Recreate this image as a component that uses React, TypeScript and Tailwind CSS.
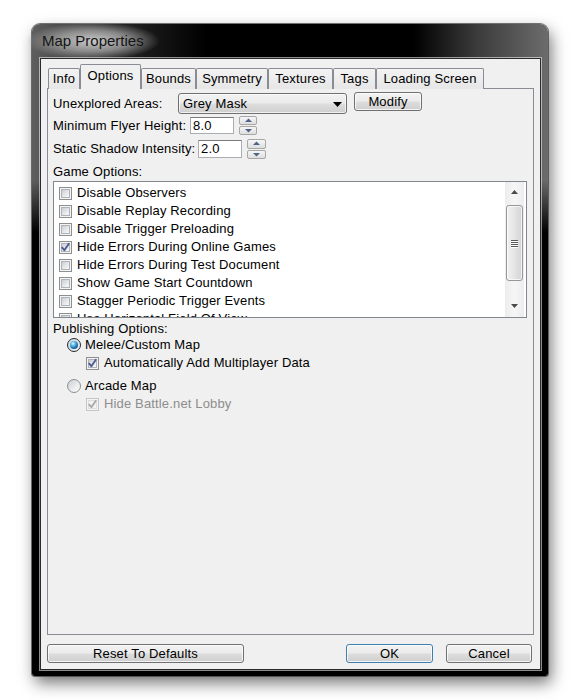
import React from "react";

const btnBase =
  "flex items-center justify-center rounded-[3px] border bg-[linear-gradient(180deg,#f2f2f2_0%,#ebebeb_48%,#dddddd_52%,#cfcfcf_100%)] shadow-[inset_0_0_0_1px_rgba(255,255,255,0.75)] leading-[16px]";

function Check({ checked = false, disabled = false }: { checked?: boolean; disabled?: boolean }) {
  return (
    <span
      className={
        disabled
          ? "relative inline-block w-[13px] h-[13px] shrink-0 border border-[#c5c5c5] bg-[#f4f4f4]"
          : "relative inline-block w-[13px] h-[13px] shrink-0 border border-[#8e8f8f] bg-[#f4f4f4]"
      }
    >
      <span
        className={
          disabled
            ? "absolute inset-[1px] border border-[#dedede] bg-[#f2f2f2]"
            : "absolute inset-[1px] border border-[#b0b4ba] bg-[linear-gradient(135deg,#c9cdd3_0%,#e6e8eb_55%,#f8f8f8_100%)]"
        }
      />
      {checked && (
        <svg className="absolute left-0 top-0" width="11" height="11" viewBox="0 0 11 11">
          <path
            d="M2.2 5.6 L4.4 8.3 L8.8 1.8"
            fill="none"
            stroke={disabled ? "#a9a9a9" : "#4a5a8f"}
            strokeWidth="1.8"
            strokeLinecap="round"
            strokeLinejoin="round"
          />
        </svg>
      )}
    </span>
  );
}

function Radio({ checked = false }: { checked?: boolean }) {
  return (
    <span
      className={
        checked
          ? "relative inline-block w-[14px] h-[14px] shrink-0 rounded-full border border-[#1f2a33] bg-[linear-gradient(135deg,#cfd4da,#f4f4f4)]"
          : "relative inline-block w-[14px] h-[14px] shrink-0 rounded-full border border-[#8e8f8f] bg-[linear-gradient(135deg,#c9cdd3_0%,#eceef0_60%,#fafafa_100%)]"
      }
    >
      {checked && (
        <span className="absolute inset-[2px] rounded-full bg-[radial-gradient(circle_at_38%_32%,#e8f8ff_0%,#62bde8_28%,#1b6fae_62%,#0a2f5c_100%)]" />
      )}
    </span>
  );
}

function Spinner({ h }: { h: string }) {
  return (
    <div className={h === "19" ? "flex flex-col w-[18px] h-[19px] gap-[1px]" : "flex flex-col w-[19px] h-[20px] gap-[1px]"}>
      {[0, 1].map((i) => (
        <div
          key={i}
          className="flex-1 flex items-center justify-center rounded-[2px] border border-[#a7a7a7] bg-[linear-gradient(180deg,#f6f6f6,#dedede)]"
        >
          <svg width="9" height="5" viewBox="0 0 9 5">
            {i === 0 ? (
              <path d="M1 4 L4.5 0.5 L8 4 Z" fill="#4d6287" />
            ) : (
              <path d="M1 1 L4.5 4.5 L8 1 Z" fill="#4d6287" />
            )}
          </svg>
        </div>
      ))}
    </div>
  );
}

const tabs: { label: string; w: string; selected?: boolean }[] = [
  { label: "Info", w: "w-[32px]" },
  { label: "Options", w: "w-[61px]", selected: true },
  { label: "Bounds", w: "w-[55px]" },
  { label: "Symmetry", w: "w-[72px]" },
  { label: "Textures", w: "w-[65px]" },
  { label: "Tags", w: "w-[43px]" },
  { label: "Loading Screen", w: "w-[108px]" },
];

const items: { label: string; checked?: boolean }[] = [
  { label: "Disable Observers" },
  { label: "Disable Replay Recording" },
  { label: "Disable Trigger Preloading" },
  { label: "Hide Errors During Online Games", checked: true },
  { label: "Hide Errors During Test Document" },
  { label: "Show Game Start Countdown" },
  { label: "Stagger Periodic Trigger Events" },
  { label: "Use Horizontal Field Of View" },
];

export default function App() {
  return (
    <div className="w-[580px] h-[700px] bg-white pt-[24px] pl-[32px] font-['Liberation_Sans',Arial,sans-serif] text-[13px] tracking-[0.15px] text-black">
      <div className="w-[516px] h-[652px] flex flex-col rounded-t-[8px] rounded-b-[3px] bg-[linear-gradient(180deg,rgba(0,0,0,0)_0%,rgba(0,0,0,0)_24%,#000_32%),linear-gradient(90deg,#5e5e5e_0%,#262626_16%,#000_34%,#000_74%,#3a3a3a_86%,#6c6c6c_100%)] shadow-[0_0_0_1px_rgba(60,60,60,0.7),3px_7px_16px_rgba(0,0,0,0.55)]">
        {/* title bar */}
        <div className="h-[34px] flex items-center pl-[10px]">
          <span className="-ml-[16px] px-[16px] py-[10px] text-[15px] tracking-normal leading-[18px] text-[#141414] bg-[radial-gradient(closest-side,rgba(210,210,210,0.95)_0%,rgba(165,165,165,0.75)_55%,rgba(0,0,0,0)_100%)]">
            Map Properties
          </span>
        </div>
        {/* body */}
        <div className="flex-1 flex pl-[8px] pr-[7px] pb-[6px]">
          <div className="flex-1 flex flex-col bg-[#f0f0f0] border border-[#2a2a2a] shadow-[0_0_0_1px_rgba(255,255,255,0.55)] pt-[5px] pl-[6px] pr-[6px] pb-[6px]">
            {/* tab strip */}
            <div className="relative z-10 flex items-end h-[25px] -mb-[1px] pl-[1px]">
              {tabs.map((t) =>
                t.selected ? (
                  <div
                    key={t.label}
                    className={`${t.w} h-[25px] flex items-start justify-center pt-[3px] leading-[16px] bg-[#f0f0f0] border border-b-0 border-[#898c95] rounded-t-[2px]`}
                  >
                    {t.label}
                  </div>
                ) : (
                  <div
                    key={t.label}
                    className={`${t.w} h-[21px] flex items-center justify-center pb-[1px] leading-[16px] bg-[linear-gradient(180deg,#f3f3f3,#e6e6e6)] border border-b-0 border-[#898c95] rounded-t-[2px]`}
                  >
                    {t.label}
                  </div>
                )
              )}
            </div>
            {/* panel */}
            <div className="flex-1 border border-[#898c95] bg-[#f0f0f0] pl-[5px] pt-[4px] flex flex-col">
              {/* row 1 */}
              <div className="flex items-start h-[21px]">
                <div className="w-[125px] h-[21px] flex items-center leading-[16px]">Unexplored Areas:</div>
                <div className="relative w-[169px] h-[21px] flex items-center pl-[4px] rounded-[3px] border border-[#707070] bg-[linear-gradient(180deg,#f2f2f2_0%,#ebebeb_48%,#dddddd_52%,#cfcfcf_100%)] shadow-[inset_0_0_0_1px_rgba(255,255,255,0.7)] leading-[16px]">
                  Grey Mask
                  <svg className="absolute right-[4px] top-[8px]" width="9" height="5" viewBox="0 0 9 5">
                    <path d="M0 0 L9 0 L4.5 5 Z" fill="#000" />
                  </svg>
                </div>
                <div className={`${btnBase} ml-[7px] -mt-[1px] w-[68px] h-[19px] border-[#707070]`}>Modify</div>
              </div>
              {/* row 2 */}
              <div className="flex items-center h-[19px] mt-[2px]">
                <div className="w-[137px] leading-[16px]">Minimum Flyer Height:</div>
                <div className="w-[44px] h-[17px] flex items-center pl-[2px] bg-white border border-[#abadb3] border-t-[#7a7a7a] leading-[16px]">8.0</div>
                <div className="ml-[5px]">
                  <Spinner h="19" />
                </div>
              </div>
              {/* row 3 */}
              <div className="flex items-center h-[20px] mt-[4px]">
                <div className="w-[145px] leading-[16px]">Static Shadow Intensity:</div>
                <div className="w-[44px] h-[18px] flex items-center pl-[2px] bg-white border border-[#abadb3] border-t-[#7a7a7a] leading-[16px]">2.0</div>
                <div className="ml-[5px]">
                  <Spinner h="20" />
                </div>
              </div>
              {/* game options */}
              <div className="h-[18px] mt-[4px] flex items-center leading-[16px]">Game Options:</div>
              <div className="w-[474px] h-[137px] flex border border-[#828790] bg-white overflow-hidden">
                <div className="flex-1 flex flex-col pt-[2px] pl-[5px] overflow-hidden">
                  {items.map((it) => (
                    <div key={it.label} className="h-[18px] shrink-0 flex items-center gap-[5px] leading-[16px]">
                      <Check checked={it.checked} />
                      <span>{it.label}</span>
                    </div>
                  ))}
                </div>
                {/* scrollbar */}
                <div className="w-[19px] mr-[2px] flex flex-col items-center bg-[linear-gradient(90deg,#ececec,#f6f6f6_50%,#ececec)]">
                  <div className="h-[20px] w-full flex items-center justify-center">
                    <svg width="7" height="4" viewBox="0 0 7 4">
                      <path d="M0 4 L3.5 0 L7 4 Z" fill="#4a4a4a" />
                    </svg>
                  </div>
                  <div className="mt-[3px] w-[17px] h-[76px] rounded-[3px] border border-[#979797] bg-[linear-gradient(90deg,#f1f1f1_0%,#e4e4e4_50%,#d3d3d3_100%)] shadow-[inset_0_0_0_1px_rgba(255,255,255,0.7)] flex flex-col items-center justify-center gap-[1px]">
                    {[0, 1, 2, 3].map((i) => (
                      <div key={i} className="w-[7px] h-[1px] bg-[#5a5a5a] shadow-[0_1px_0_#ffffff]" />
                    ))}
                  </div>
                  <div className="flex-1" />
                  <div className="h-[22px] w-full flex items-center justify-center">
                    <svg width="7" height="4" viewBox="0 0 7 4">
                      <path d="M0 0 L7 0 L3.5 4 Z" fill="#4a4a4a" />
                    </svg>
                  </div>
                </div>
              </div>
              {/* publishing */}
              <div className="h-[16px] mt-[3px] flex items-center leading-[16px]">Publishing Options:</div>
              <div className="h-[16px] flex items-center gap-[4px] pl-[14px] leading-[16px]">
                <Radio checked />
                <span>Melee/Custom Map</span>
              </div>
              <div className="h-[16px] mt-[2px] flex items-center gap-[5px] pl-[33px] leading-[16px]">
                <Check checked />
                <span>Automatically Add Multiplayer Data</span>
              </div>
              <div className="h-[16px] mt-[7px] flex items-center gap-[4px] pl-[14px] leading-[16px]">
                <Radio />
                <span>Arcade Map</span>
              </div>
              <div className="h-[16px] mt-[2px] flex items-center gap-[5px] pl-[33px] leading-[16px]">
                <Check checked disabled />
                <span className="text-[#8d8d8d]">Hide Battle.net Lobby</span>
              </div>
            </div>
            {/* buttons */}
            <div className="flex items-center mt-[9px] h-[19px] pr-[2px]">
              <div className={`${btnBase} w-[197px] h-[19px] border-[#707070]`}>Reset To Defaults</div>
              <div className={`${btnBase} ml-auto w-[87px] h-[19px] border-[#3c7fb1] shadow-[inset_0_0_0_1px_#bfe6f8]`}>OK</div>
              <div className={`${btnBase} ml-[13px] w-[86px] h-[19px] border-[#707070]`}>Cancel</div>
            </div>
          </div>
        </div>
      </div>
    </div>
  );
}
